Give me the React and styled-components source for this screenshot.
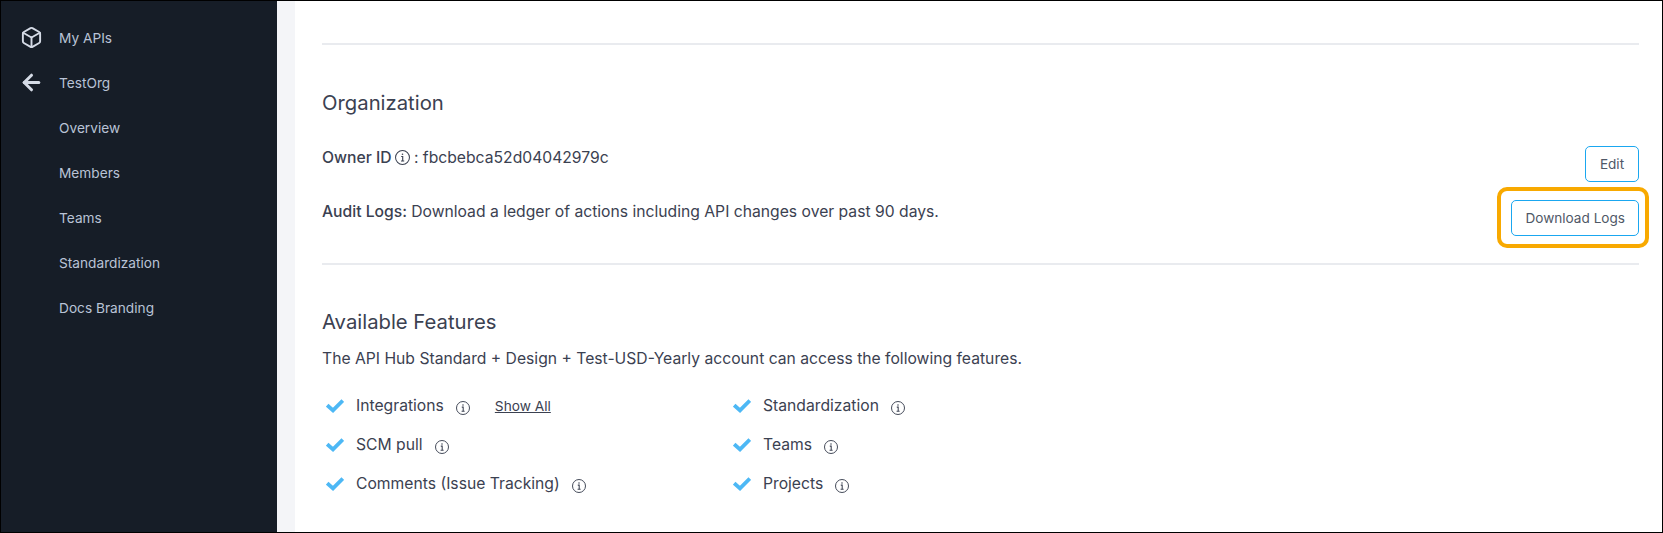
import React from 'react';
import styled, { createGlobalStyle } from 'styled-components';
import { Box, ArrowLeft } from 'lucide-react';

const GlobalStyle = createGlobalStyle`
  html, body {
    margin: 0;
    padding: 0;
    background: #fff;
  }
  * {
    box-sizing: border-box;
  }
`;

const Frame = styled.div`
  width: 1663px;
  height: 533px;
  border: 1px solid #000;
  display: flex;
  overflow: hidden;
  font-family: Inter, 'Liberation Sans', sans-serif;
  color: #3b4151;
`;

const Sidebar = styled.nav`
  width: 276px;
  flex-shrink: 0;
  background: #161d27;
  padding-top: 14px;
  display: flex;
  flex-direction: column;
`;

const NavItem = styled.div`
  height: 45px;
  display: flex;
  align-items: center;
  padding-left: 15px;
  font-size: 13.7px;
  color: #b9c3d6;
`;

const NavIcon = styled.span`
  width: 30px;
  margin-right: 13px;
  display: flex;
  align-items: center;
  justify-content: center;
  color: #d5dbe6;
`;

const Gutter = styled.div`
  width: 18px;
  flex-shrink: 0;
  background: #f4f5f8;
`;

const Main = styled.main`
  flex: 1;
  padding: 0 23px 0 27px;
`;

const Divider = styled.hr`
  border: 0;
  height: 2px;
  background: #e9ebef;
  margin: 0;
`;

const TopDivider = styled(Divider)`
  margin-top: 42px;
`;

const Section = styled.section`
  padding-top: ${(p) => p.$top}px;
`;

const Heading = styled.h2`
  margin: 0;
  font-size: 20.3px;
  font-weight: 400;
  line-height: 24px;
  color: #3b4151;
`;

const Rows = styled.div`
  margin-top: 31px;
  padding-bottom: 27px;
  display: flex;
  flex-direction: column;
  gap: 18px;
`;

const Row = styled.div`
  display: flex;
  justify-content: space-between;
  height: 36px;
`;

const RowText = styled.div`
  font-size: 15.7px;
  display: flex;
  align-items: center;
  height: 22px;
  white-space: pre;
`;

const Label = styled.strong`
  font-weight: 500;
`;

const Button = styled.button`
  height: 36px;
  min-width: 54px;
  padding: 0 13px;
  background: #fff;
  border: 1px solid #1aa7f0;
  border-radius: 5px;
  font-family: inherit;
  font-size: 13.6px;
  color: #4f5867;
`;

const Highlight = styled.div`
  position: relative;
  &::after {
    content: '';
    position: absolute;
    inset: -13px -10px -12px -14px;
    border: 4px solid #f8a900;
    border-radius: 10px;
    pointer-events: none;
  }
`;

const Lead = styled.p`
  margin: 14px 0 0;
  font-size: 15.7px;
  line-height: 22px;
`;

const FeatureGrid = styled.div`
  margin-top: 16px;
  display: grid;
  grid-template-columns: 407px 407px;
  grid-auto-rows: 39px;
`;

const Feature = styled.div`
  display: flex;
  align-items: center;
  font-size: 15.7px;
`;

const Check = styled.svg`
  width: 18px;
  height: 14px;
  margin: 0 12px 0 4px;
  flex-shrink: 0;
`;

const ShowAll = styled.a`
  margin-left: 25px;
  font-size: 13.7px;
  color: #3b4151;
  text-decoration: underline;
`;

const InfoSvg = styled.svg`
  width: ${(p) => p.$size}px;
  height: ${(p) => p.$size}px;
  margin-left: ${(p) => p.$left}px;
  margin-top: ${(p) => p.$drop}px;
  flex-shrink: 0;
`;

const Info = ({ size = 14, left = 12, drop = 4 }) => (
  <InfoSvg $size={size} $left={left} $drop={drop} viewBox="0 0 14 14" fill="none" stroke="#3b4151">
    <circle cx="7" cy="7" r="6.5" strokeWidth="0.95" />
    <path d="M5.8 6.1H7.2V10.2M5.6 10.3H8.6" strokeWidth="1.05" />
    <circle cx="7" cy="3.9" r="0.75" fill="#3b4151" stroke="none" />
  </InfoSvg>
);

const Tick = () => (
  <Check viewBox="0 0 18 14">
    <path d="M1.2 6.2L7 11.4L16.8 1.6" fill="none" stroke="#4db8f5" strokeWidth="3.8" />
  </Check>
);

const navItems = ['Overview', 'Members', 'Teams', 'Standardization', 'Docs Branding'];

const features = [
  { name: 'Integrations', showAll: true },
  { name: 'Standardization' },
  { name: 'SCM pull' },
  { name: 'Teams' },
  { name: 'Comments (Issue Tracking)' },
  { name: 'Projects' },
];

const App = () => (
  <>
    <GlobalStyle />
    <Frame>
      <Sidebar>
        <NavItem>
          <NavIcon><Box size={23} strokeWidth={2} /></NavIcon>
          My APIs
        </NavItem>
        <NavItem>
          <NavIcon><ArrowLeft size={25} strokeWidth={2.9} /></NavIcon>
          TestOrg
        </NavItem>
        {navItems.map((item) => (
          <NavItem key={item}>
            <NavIcon />
            {item}
          </NavItem>
        ))}
      </Sidebar>
      <Gutter />
      <Main>
        <TopDivider />
        <Section $top={46}>
          <Heading>Organization</Heading>
          <Rows>
            <Row>
              <RowText>
                <Label>Owner ID</Label>
                <Info size={15} left={3} drop={0} />
                <span> : fbcbebca52d04042979c</span>
              </RowText>
              <Button>Edit</Button>
            </Row>
            <Row>
              <RowText>
                <Label>Audit Logs: </Label>Download a ledger of actions including API changes over past 90 days.
              </RowText>
              <Highlight>
                <Button>Download Logs</Button>
              </Highlight>
            </Row>
          </Rows>
        </Section>
        <Divider />
        <Section $top={45}>
          <Heading>Available Features</Heading>
          <Lead>The API Hub Standard + Design + Test-USD-Yearly account can access the following features.</Lead>
          <FeatureGrid>
            {features.map((f) => (
              <Feature key={f.name}>
                <Tick />
                {f.name}
                <Info />
                {f.showAll && <ShowAll>Show All</ShowAll>}
              </Feature>
            ))}
          </FeatureGrid>
        </Section>
      </Main>
    </Frame>
  </>
);

export default App;
